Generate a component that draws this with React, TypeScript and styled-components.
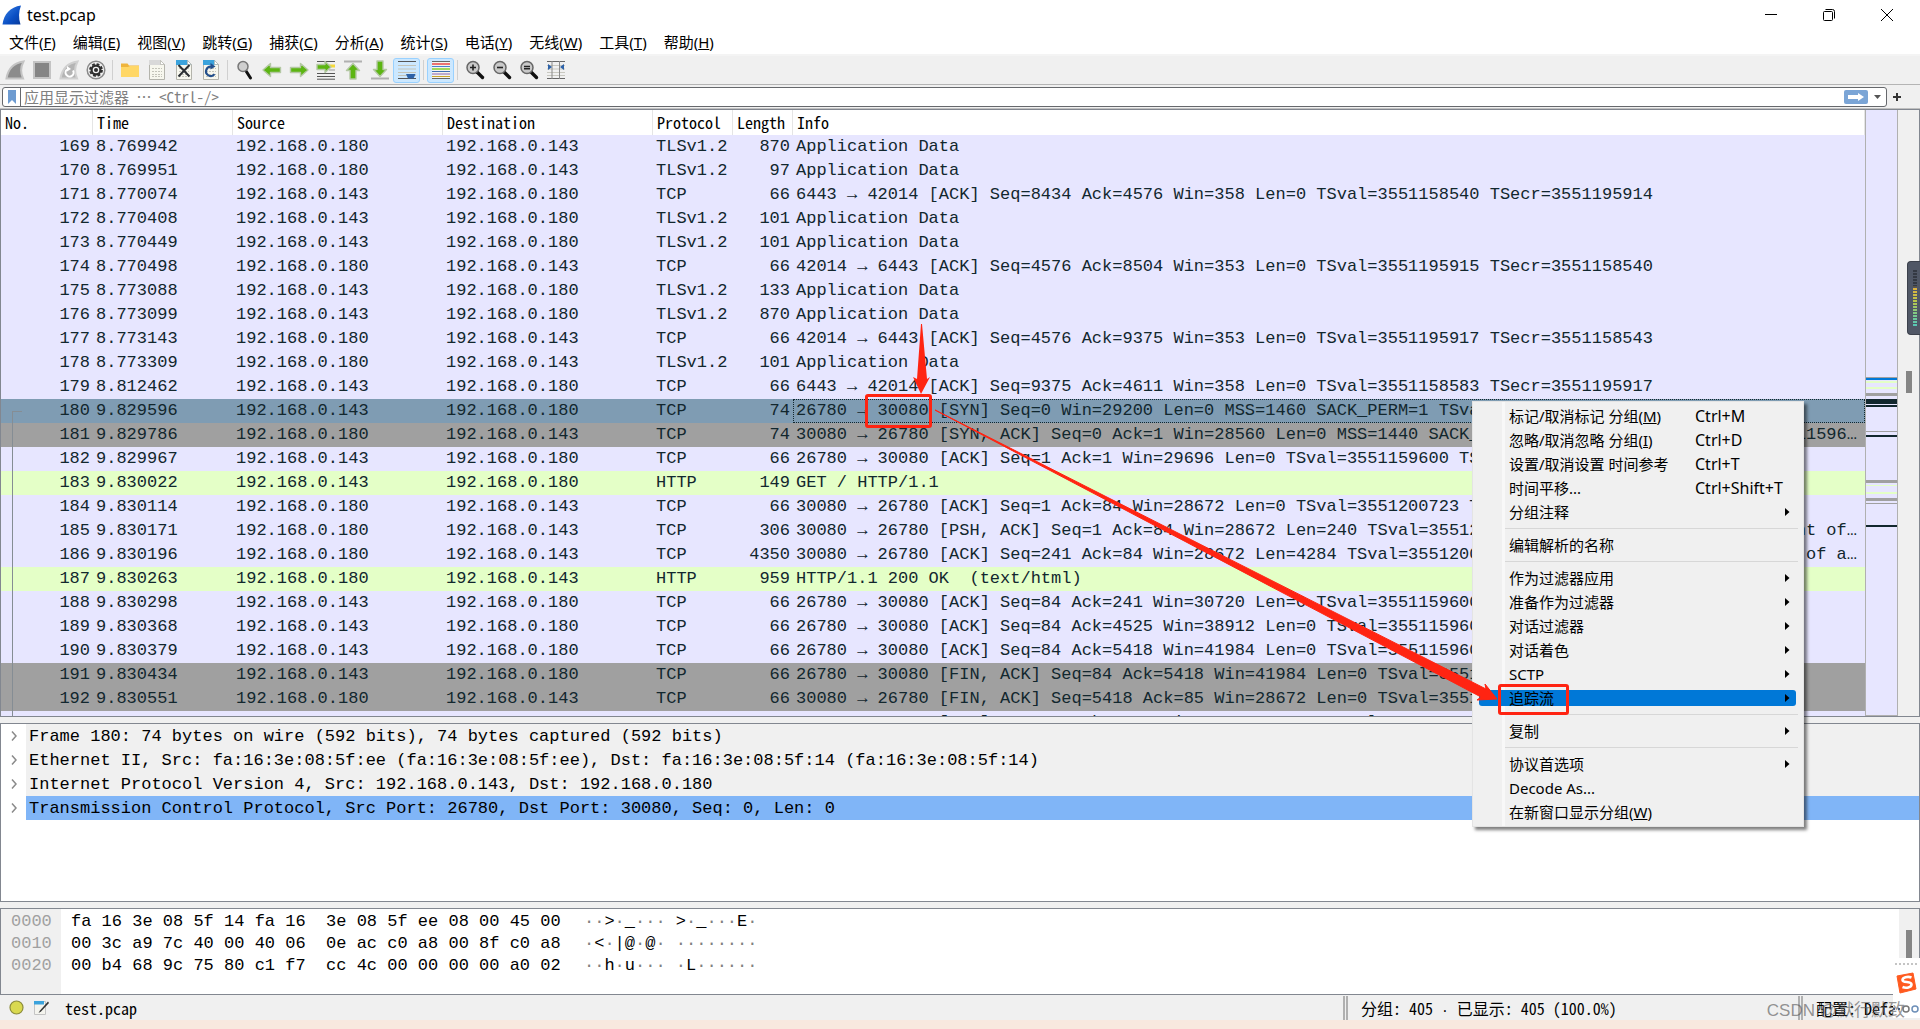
import React from "react";
import styled, { createGlobalStyle, css } from "styled-components";

const MONO = '"Liberation Mono", monospace';
const UI = '"Noto Sans", "Noto Sans CJK SC", sans-serif';
const SONG = '"Noto Sans Mono CJK SC", "Noto Sans CJK SC", monospace';

const Global = createGlobalStyle`
  *, *::before, *::after { box-sizing: border-box; }
  body { margin: 0; background: #f8e8df; color: #000; font-family: ${UI}; }
  button, input { font: inherit; color: inherit; }
`;

const Window = styled.div`
  position: relative;
  display: flex;
  flex-direction: column;
  height: 100vh;
  overflow: hidden;
  padding-bottom: 9px;
`;

/* ---------- title and menu bar ---------- */

const TitleBar = styled.header`
  display: flex;
  align-items: center;
  flex: none;
  height: 29px;
  padding: 0 19px 0 2px;
  gap: 5px;
  background: #fff;
`;

const Title = styled.h1`
  flex: 1;
  margin: 0;
  font-size: 16px;
  line-height: 24px;
  font-weight: 400;
`;

const WindowButtons = styled.div`
  display: flex;
  gap: 30px;
`;

const PlainButton = styled.button`
  display: flex;
  align-items: center;
  justify-content: center;
  padding: 0;
  border: 0;
  background: transparent;
`;

const WindowButton = styled(PlainButton)`
  width: 28px;
  height: 24px;
`;

const MenuBar = styled.nav`
  display: flex;
  flex: none;
  height: 27px;
  padding: 0 9px;
  gap: 17px;
  background: #fff;
  border-bottom: 2px solid #f4f4f4;
`;

const MenuButton = styled(PlainButton)`
  font-size: 15px;
  line-height: 24px;
  white-space: nowrap;
`;

/* ---------- tool bar ---------- */

const ToolBar = styled.div`
  display: flex;
  align-items: center;
  flex: none;
  height: 29px;
  padding-left: 1px;
  background: #f0f0f0;
  border-bottom: 1px solid #b4b4b4;
`;

const ToolButton = styled(PlainButton)<{ $on?: boolean }>`
  width: 27px;
  height: 25px;
  border-radius: 3px;
  ${(p) => p.$on && css`
    background: #cce8ff;
    border: 1px solid #99d1ff;
  `}
`;

const ToolSeparator = styled.span`
  width: 1px;
  height: 20px;
  margin: 0 3px;
  background: #d0d0d0;
`;

/* ---------- display filter ---------- */

const FilterBar = styled.form`
  display: flex;
  align-items: center;
  flex: none;
  height: 24px;
  padding: 1px 16px 0 2px;
  gap: 3px;
  background: #f0f0f0;
  border-bottom: 1px solid #c0c0c0;
`;

const FilterBox = styled.div`
  display: flex;
  align-items: center;
  flex: 1;
  height: 20px;
  border: 1px solid #66686c;
  border-radius: 3px;
  background: #fff;
`;

const BookmarkButton = styled(PlainButton)`
  width: 18px;
  height: 18px;
  border-right: 1px solid #66686c;
`;

const FilterInput = styled.input`
  flex: 1;
  min-width: 0;
  height: 18px;
  padding: 0 0 0 3px;
  border: 0;
  outline: 0;
  background: transparent;
  font-family: ${SONG};
  font-size: 15px;
  line-height: 18px;
  &::placeholder { color: #808080; opacity: 1; }
`;

const ApplyButton = styled(PlainButton)`
  width: 24px;
  height: 14px;
  border-radius: 2px;
  background: #7ba5d6;
`;

const DropButton = styled(PlainButton)`
  width: 18px;
  height: 18px;
`;

const AddButton = styled(PlainButton)`
  width: 14px;
  height: 18px;
`;

/* ---------- panes ---------- */

const Panes = styled.main`
  display: flex;
  flex-direction: column;
  flex: 1;
  min-height: 0;
  gap: 6px;
  background: #f0f0f0;
`;

const Pane = styled.section<{ $share: number }>`
  display: flex;
  flex: ${(p) => p.$share} 1 0;
  min-height: 0;
  overflow: hidden;
  border: 1px solid #828790;
  background: #fff;
`;

const ListBody = styled.div`
  flex: 1;
  min-width: 0;
  overflow: hidden;
`;

const PacketTable = styled.table`
  width: 100%;
  table-layout: fixed;
  border-collapse: separate;
  border-spacing: 0;
  font-family: ${MONO};
  font-size: 17px;
  line-height: 24px;
`;

const HeadCell = styled.th`
  height: 25px;
  padding: 0 0 0 4px;
  border-right: 1px solid #e5e5e5;
  font-family: ${SONG};
  font-size: 16px;
  line-height: 24px;
  font-weight: 400;
  text-align: left;
  vertical-align: top;
`;

type Tone = "tcp" | "http" | "syn" | "sel";
const tones: Record<Tone, string> = {
  tcp: "#e7e6ff",
  http: "#e4ffc7",
  syn: "#a0a0a0",
  sel: "#7f9cb3",
};

const PacketRow = styled.tr<{ $tone: Tone }>`
  height: 24px;
  color: #12272e;
  background: ${(p) => tones[p.$tone]};
`;

const Cell = styled.td<{ $right?: boolean; $focus?: boolean }>`
  height: 24px;
  padding: 0 3px;
  overflow: hidden;
  white-space: pre;
  text-overflow: ellipsis;
  text-align: ${(p) => (p.$right ? "right" : "left")};
  ${(p) => p.$focus && css`
    outline: 1px dotted #12272e;
    outline-offset: -1px;
  `}
`;

const NumberCell = styled(Cell)<{ $link?: "start" | "through" }>`
  position: relative;
  ${(p) => p.$link && css`
    &::before {
      content: "";
      position: absolute;
      left: 11px;
      width: 10px;
      bottom: 0;
      top: ${p.$link === "start" ? "12px" : "0"};
      border-left: 1px solid #858d94;
      border-top: ${p.$link === "start" ? "1px solid #858d94" : "0"};
    }
  `}
`;

const MiniMap = styled.div`
  flex: none;
  width: 33px;
  border: 1px solid #b0b0b0;
  border-top: 0;
  background: #e7e6ff;
`;

const ScrollTrack = styled.div<{ $w: number }>`
  position: relative;
  flex: none;
  width: ${(p) => p.$w}px;
  background: #f0f0f0;
`;

const ScrollThumb = styled.span<{ $top: number; $h: number }>`
  position: absolute;
  right: 7px;
  top: ${(p) => p.$top}px;
  width: 6px;
  height: ${(p) => p.$h}px;
  background: #858585;
`;

const Tree = styled.ul`
  flex: 1;
  min-width: 0;
  margin: 0;
  padding: 0;
  list-style: none;
`;

const TreeItem = styled.li`
  display: flex;
  height: 24px;
`;

const Expander = styled(PlainButton)`
  flex: none;
  width: 25px;
  height: 24px;
`;

const TreeText = styled.span<{ $selected?: boolean }>`
  flex: 1;
  padding-left: 3px;
  white-space: pre;
  font-family: ${MONO};
  font-size: 17px;
  line-height: 26px;
  background: ${(p) => (p.$selected ? "#80b5f7" : "#f0f0f0")};
`;

const HexTable = styled.div`
  display: flex;
  flex: 1;
  min-width: 0;
  font-family: ${MONO};
  font-size: 17px;
  line-height: 22px;
  white-space: pre;
`;

const HexOffsets = styled.div`
  flex: none;
  width: 60px;
  padding: 2px 0 0 10px;
  background: #f0f0f0;
  color: #a0a0a0;
`;

const HexBytes = styled.div`
  flex: none;
  width: 523px;
  padding: 2px 0 0 10px;
`;

const HexAscii = styled.div`
  padding-top: 2px;
`;

const Dim = styled.span`
  color: #808080;
`;

/* ---------- status bar ---------- */

const StatusBar = styled.footer`
  display: flex;
  align-items: center;
  flex: none;
  height: 25px;
  padding-left: 9px;
  background: #f0f0f0;
  font-family: ${SONG};
  font-size: 16px;
  line-height: 24px;
  white-space: pre;
`;

const StatusIcons = styled.div`
  display: flex;
  align-items: center;
  gap: 8px;
  width: 56px;
`;

const StatusFile = styled.span`
  flex: 1;
`;

const StatusPart = styled.span<{ $w: number }>`
  width: ${(p) => p.$w}px;
  height: 24px;
  padding-left: 13px;
  border-left: 5px double #b0b0b0;
`;

/* The CJK face would draw the middle dot two columns wide. */
const NarrowDot = styled.span`
  font-family: ${MONO};
  font-size: 13px;
`;

/* ---------- context menu ---------- */

const Popup = styled.div`
  position: absolute;
  left: 1472px;
  top: 401px;
  width: 332px;
  padding: 2px;
  border: 1px solid #e4e4e4;
  background: linear-gradient(90deg, #f0f0f0 29px, #f8f8f8 29px, #f8f8f8 32px, #f0f0f0 32px);
  box-shadow: 3px 3px 3px rgba(0, 0, 0, 0.5);
`;

const PopupItem = styled.button<{ $active?: boolean }>`
  position: relative;
  isolation: isolate;
  display: grid;
  grid-template-columns: 186px 1fr 12px;
  align-items: center;
  width: 100%;
  height: 24px;
  padding: 0 4px 0 34px;
  border: 0;
  text-align: left;
  white-space: nowrap;
  font-size: 15px;
  line-height: 24px;
  background: transparent;
  ${(p) => p.$active && css`
    &::before {
      content: "";
      position: absolute;
      z-index: -1;
      inset: 4px 5px 4px 4px;
      border-radius: 3px;
      background: #0078d7;
    }
  `}
`;

const Shortcut = styled.span`
  font-size: 16px;
`;

const PopupRule = styled.hr`
  height: 1px;
  margin: 4px 3px 4px 30px;
  border: 0;
  background: #d7d7d7;
`;

/* ---------- overlays ---------- */

const Marks = styled.svg`
  position: absolute;
  left: 0;
  top: 0;
  pointer-events: none;
`;

const MarkBox = styled.span<{ $x: number; $y: number; $w: number; $h: number }>`
  position: absolute;
  left: ${(p) => p.$x}px;
  top: ${(p) => p.$y}px;
  width: ${(p) => p.$w}px;
  height: ${(p) => p.$h}px;
  border: 3px solid #ff2412;
  border-radius: 3px;
  pointer-events: none;
`;

const Meter = styled.div`
  position: absolute;
  right: 0;
  top: 261px;
  width: 13px;
  height: 74px;
  padding: 8px 3px 7px 5px;
  border: 1px solid #3c414c;
  border-right: 0;
  border-radius: 4px 0 0 4px;
  background: #505766;
`;

const MeterBars = styled.div`
  height: 100%;
  background:
    repeating-linear-gradient(transparent 0 2px, #505766 2px 3px),
    linear-gradient(#343943 0 28%, #e0b13c 32%, #b9c84b 55%, #7cc98a 78%, #52c8bb);
`;

const ImeBar = styled.div`
  position: absolute;
  right: 0;
  bottom: 11px;
  display: flex;
  flex-direction: column;
  align-items: center;
  width: 27px;
  height: 60px;
  background: #fff;
`;

const Watermark = styled.span`
  position: absolute;
  right: 15px;
  bottom: 6px;
  color: rgba(90, 90, 90, 0.65);
  font-family: "Liberation Sans", "Noto Sans CJK SC", sans-serif;
  font-size: 17px;
  line-height: 24px;
`;

/* ---------- icons ---------- */

const Svg = ({ children, w = 20, h = 20 }: { children: React.ReactNode; w?: number; h?: number }) => (
  <svg width={w} height={h} viewBox={`0 0 ${w} ${h}`} fill="none" aria-hidden="true">
    {children}
  </svg>
);

const FIN = "M1.5 18.500C3 9 8 3 18.500 1.500C15.500 7 15.500 13 18 18.500Z";

const Sheet = ({ tint, mark }: { tint: string; mark?: React.ReactNode }) => (
  <Svg>
    <path d="M2.500 .5h11l4 4v15h-15z" fill="#f7f7ee" stroke="#b4b4ac" />
    <path d="M2 0h11.500l4 5H2z" fill={tint} />
    <path d="M13.500 .5v4h4z" fill="#fff" stroke="#b4b4ac" strokeWidth=".7" />
    <path d="M5 8.500h10M5 11.500h10M5 14.500h10M5 16.500h10" stroke="#c4c4ba" strokeDasharray="2 1" />
    {mark}
  </Svg>
);

const Magnifier = ({ mark }: { mark?: string }) => (
  <Svg>
    <path d="M12 12l5.500 5.500" stroke="#111" strokeWidth="3.400" strokeLinecap="round" />
    <circle cx="8" cy="7.500" r="6" fill="#c9c9c9" stroke="#666" strokeWidth="1.500" />
    {mark && <path d={mark} stroke="#222" strokeWidth="1.600" />}
  </Svg>
);

const ARROW_STYLE = { fill: "#5cb512", stroke: "#b4c8a4", strokeWidth: 1.4, strokeLinejoin: "round" as const };

const icons: Record<string, React.ReactNode> = {
  start: <Svg><path d={FIN} fill="#8c8c8c" stroke="#c4c4c4" strokeWidth="2" /></Svg>,
  stop: <Svg><path d="M2 2h16v16H2z" fill="#858585" stroke="#c4c4c4" strokeWidth="2" /></Svg>,
  restart: (
    <Svg>
      <path d={FIN} fill="#b4b4b4" stroke="#d0d0d0" strokeWidth="2" />
      <path d="M8 9.500a4 4 0 1 0 6 1" stroke="#fff" strokeWidth="2" />
      <path d="M8 6v5.500l4-2.500z" fill="#fff" />
    </Svg>
  ),
  options: (
    <Svg>
      <circle cx="10" cy="10" r="8.800" fill="#f2f2f2" stroke="#8a8a8a" strokeWidth="1.500" />
      <circle cx="10" cy="10" r="6" stroke="#2e2e2e" strokeWidth="1.800" strokeDasharray="2.800 1.900" />
      <circle cx="10" cy="10" r="4.400" fill="#f2f2f2" stroke="#2e2e2e" strokeWidth="2.200" />
      <circle cx="10" cy="10" r="2" fill="#2e2e2e" />
    </Svg>
  ),
  open: (
    <Svg>
      <path d="M1 3.500h6.500l1.500 2h10V17H1z" fill="#efb43c" />
      <path d="M1 7h7l2-1h9v11H1z" fill="#ffd766" />
    </Svg>
  ),
  save: <Sheet tint="#d9d9d9" />,
  close: <Sheet tint="#3ba3dc" mark={<path d="M4.500 5l11 11.500M15.500 5l-11 11.500" stroke="#2b2f33" strokeWidth="2" />} />,
  reload: (
    <Sheet
      tint="#3ba3dc"
      mark={<><path d="M13.500 14.200a4.700 4.700 0 1 1-2.500-7.400" stroke="#24508c" strokeWidth="2.200" /><path d="M9.500 3l5 3.500-5 3z" fill="#24508c" /></>}
    />
  ),
  find: (
    <Svg>
      <path d="M11 11l4.500 7" stroke="#111" strokeWidth="3" strokeLinecap="round" />
      <circle cx="8" cy="6.500" r="5" fill="#cfcfcf" stroke="#777" strokeWidth="1.500" />
    </Svg>
  ),
  back: <Svg><path d="M1 10l7.500-6.500v4h10v5h-10v4z" {...ARROW_STYLE} /></Svg>,
  forward: <Svg><path d="M19 10l-7.500-6.500v4h-10v5h10v4z" {...ARROW_STYLE} /></Svg>,
  goto: (
    <Svg>
      <path d="M1 1.500h18M1 13.500h18M1 16.500h18M1 19.200h18" stroke="#555" />
      <path d="M13 6h6" stroke="#f5d93a" strokeWidth="3" />
      <path d="M13 10h6" stroke="#999" />
      <path d="M15 7L9 1.500v3H1v5h8v3z" {...ARROW_STYLE} />
    </Svg>
  ),
  first: (
    <Svg>
      <path d="M1 1.500h18" stroke="#b0b0b0" strokeWidth="2" />
      <path d="M10 3.500l6.500 7h-3.500v8.500h-6v-8.500h-3.500z" {...ARROW_STYLE} />
    </Svg>
  ),
  last: (
    <Svg>
      <path d="M1 18.500h18" stroke="#b0b0b0" strokeWidth="2" />
      <path d="M10 16.500l6.500-7h-3.500v-8.500h-6v8.500h-3.500z" {...ARROW_STYLE} />
    </Svg>
  ),
  autoscroll: (
    <Svg>
      <path d="M1 1.500h18M1 18.500h18" stroke="#555" />
      <path d="M1 5.500h18M1 9h18M1 12.500h18M1 15.500h18" stroke="#c4c4b8" />
      <path d="M9 14h9.500l-2 4.500h-5.500z" fill="#2d62a8" />
    </Svg>
  ),
  colorize: (
    <Svg>
      <path d="M1 1h18v18H1z" fill="#f4f4ee" />
      <path d="M1 1.500h18M1 18.500h18" stroke="#666" />
      <path d="M1 4h18" stroke="#ea4848" strokeWidth="1.500" />
      <path d="M1 6.500h18" stroke="#4a7fd0" />
      <path d="M1 9h18" stroke="#84cf2c" strokeWidth="1.500" />
      <path d="M1 11.500h18" stroke="#3f6eb4" />
      <path d="M1 14h18" stroke="#8a63b0" />
      <path d="M1 16.500h18" stroke="#c9a227" />
    </Svg>
  ),
  zoomin: <Magnifier mark="M5 7.500h6M8 4.500v6" />,
  zoomout: <Magnifier mark="M5 7.500h6" />,
  zoomreset: <Magnifier mark="M5 6.500h6M5 8.800h6" />,
  columns: (
    <Svg>
      <path d="M1 1.500h18M1 18.500h18" stroke="#666" />
      <path d="M1 5.500h18M1 9h18M1 12.500h18M1 15.500h18" stroke="#c8c8c0" />
      <path d="M6 1v18M13.500 1v18" stroke="#8a8a8a" />
      <path d="M2 4l4 3-4 3zM18 4l-4 3 4 3z" fill="#2d62a8" />
    </Svg>
  ),
};

const tools: Array<[string, string] | null> = [
  ["start", "开始捕获"], ["stop", "停止捕获"], ["restart", "重新捕获"], ["options", "捕获选项"], null,
  ["open", "打开"], ["save", "保存"], ["close", "关闭"], ["reload", "重新加载"], null,
  ["find", "查找"], ["back", "后退"], ["forward", "前进"], ["goto", "转到分组"], ["first", "首个分组"],
  ["last", "末个分组"], ["autoscroll", "自动滚动"], null, ["colorize", "着色"], null,
  ["zoomin", "放大"], ["zoomout", "缩小"], ["zoomreset", "原始大小"], ["columns", "调整列宽"],
];
const pressed = ["autoscroll", "colorize"];

/* ---------- data ---------- */

const menus = [
  ["文件", "F"], ["编辑", "E"], ["视图", "V"], ["跳转", "G"], ["捕获", "C"], ["分析", "A"],
  ["统计", "S"], ["电话", "Y"], ["无线", "W"], ["工具", "T"], ["帮助", "H"],
];

const A = "192.168.0.180";
const B = "192.168.0.143";
type Packet = [number, string, "A" | "B", string, number, string, Tone];
const packets: Packet[] = [
  [169, "8.769942", "A", "TLSv1.2", 870, "Application Data", "tcp"],
  [170, "8.769951", "A", "TLSv1.2", 97, "Application Data", "tcp"],
  [171, "8.770074", "B", "TCP", 66, "6443 → 42014 [ACK] Seq=8434 Ack=4576 Win=358 Len=0 TSval=3551158540 TSecr=3551195914", "tcp"],
  [172, "8.770408", "B", "TLSv1.2", 101, "Application Data", "tcp"],
  [173, "8.770449", "B", "TLSv1.2", 101, "Application Data", "tcp"],
  [174, "8.770498", "A", "TCP", 66, "42014 → 6443 [ACK] Seq=4576 Ack=8504 Win=353 Len=0 TSval=3551195915 TSecr=3551158540", "tcp"],
  [175, "8.773088", "B", "TLSv1.2", 133, "Application Data", "tcp"],
  [176, "8.773099", "B", "TLSv1.2", 870, "Application Data", "tcp"],
  [177, "8.773143", "A", "TCP", 66, "42014 → 6443 [ACK] Seq=4576 Ack=9375 Win=353 Len=0 TSval=3551195917 TSecr=3551158543", "tcp"],
  [178, "8.773309", "A", "TLSv1.2", 101, "Application Data", "tcp"],
  [179, "8.812462", "B", "TCP", 66, "6443 → 42014 [ACK] Seq=9375 Ack=4611 Win=358 Len=0 TSval=3551158583 TSecr=3551195917", "tcp"],
  [180, "9.829596", "B", "TCP", 74, "26780 → 30080 [SYN] Seq=0 Win=29200 Len=0 MSS=1460 SACK_PERM=1 TSval=3551159600 TSecr=0 WS=512", "sel"],
  [181, "9.829786", "A", "TCP", 74, "30080 → 26780 [SYN, ACK] Seq=0 Ack=1 Win=28560 Len=0 MSS=1440 SACK_PERM=1 TSval=51200723 TSecr=3551159600 WS=512", "syn"],
  [182, "9.829967", "B", "TCP", 66, "26780 → 30080 [ACK] Seq=1 Ack=1 Win=29696 Len=0 TSval=3551159600 TSecr=3551200723", "tcp"],
  [183, "9.830022", "B", "HTTP", 149, "GET / HTTP/1.1 ", "http"],
  [184, "9.830114", "A", "TCP", 66, "30080 → 26780 [ACK] Seq=1 Ack=84 Win=28672 Len=0 TSval=3551200723 TSecr=3551159600", "tcp"],
  [185, "9.830171", "A", "TCP", 306, "30080 → 26780 [PSH, ACK] Seq=1 Ack=84 Win=28672 Len=240 TSval=3551200723 TSecr=51159600 [TCP segment of a reassembled PDU]", "tcp"],
  [186, "9.830196", "A", "TCP", 4350, "30080 → 26780 [ACK] Seq=241 Ack=84 Win=28672 Len=4284 TSval=3551200723 TSecr=51159600 [TCP segment of a reassembled PDU]", "tcp"],
  [187, "9.830263", "A", "HTTP", 959, "HTTP/1.1 200 OK  (text/html)", "http"],
  [188, "9.830298", "B", "TCP", 66, "26780 → 30080 [ACK] Seq=84 Ack=241 Win=30720 Len=0 TSval=3551159600 TSecr=3551200723", "tcp"],
  [189, "9.830368", "B", "TCP", 66, "26780 → 30080 [ACK] Seq=84 Ack=4525 Win=38912 Len=0 TSval=3551159600 TSecr=3551200723", "tcp"],
  [190, "9.830379", "B", "TCP", 66, "26780 → 30080 [ACK] Seq=84 Ack=5418 Win=41984 Len=0 TSval=3551159600 TSecr=3551200723", "tcp"],
  [191, "9.830434", "B", "TCP", 66, "26780 → 30080 [FIN, ACK] Seq=84 Ack=5418 Win=41984 Len=0 TSval=3551159600 TSecr=3551200723", "syn"],
  [192, "9.830551", "A", "TCP", 66, "30080 → 26780 [FIN, ACK] Seq=5418 Ack=85 Win=28672 Len=0 TSval=3551200723 TSecr=3551159600", "syn"],
  [193, "9.830699", "B", "TCP", 66, "26780 → 30080 [ACK] Seq=85 Ack=5419 Win=41984 Len=0 TSval=3551159601 TSecr=3551200723", "tcp"],
];

/* [top, height, colour] of each band in the overview strip */
const bands: Array<[number, number, string]> = [
  [267, 1, "#a0a0a0"], [268, 2, "#0078d7"], [271, 2, "#e4ffc7"], [277, 2, "#e4ffc7"],
  [283, 3, "#a0a0a0"], [289, 5, "#12272e"], [295, 2, "#12272e"], [321, 1, "#a0a0a0"],
  [325, 2, "#12272e"], [370, 3, "#a0a0a0"], [375, 1, "#e4ffc7"], [382, 2, "#e4ffc7"],
  [388, 3, "#a0a0a0"], [393, 1, "#a0a0a0"], [415, 2, "#12272e"],
];

const tree = [
  "Frame 180: 74 bytes on wire (592 bits), 74 bytes captured (592 bits)",
  "Ethernet II, Src: fa:16:3e:08:5f:ee (fa:16:3e:08:5f:ee), Dst: fa:16:3e:08:5f:14 (fa:16:3e:08:5f:14)",
  "Internet Protocol Version 4, Src: 192.168.0.143, Dst: 192.168.0.180",
  "Transmission Control Protocol, Src Port: 26780, Dst Port: 30080, Seq: 0, Len: 0",
];

const hex = [
  ["0000", "fa 16 3e 08 5f 14 fa 16  3e 08 5f ee 08 00 45 00", "··>·_··· >·_···E·"],
  ["0010", "00 3c a9 7c 40 00 40 06  0e ac c0 a8 00 8f c0 a8", "·<·|@·@· ········"],
  ["0020", "00 b4 68 9c 75 80 c1 f7  cc 4c 00 00 00 00 a0 02", "··h·u··· ·L······"],
];

type Entry = { t: string; k?: string; s?: string; sub?: boolean; on?: boolean } | null;
const popup: Entry[] = [
  { t: "标记/取消标记 分组", k: "M", s: "Ctrl+M" },
  { t: "忽略/取消忽略 分组", k: "I", s: "Ctrl+D" },
  { t: "设置/取消设置 时间参考", s: "Ctrl+T" },
  { t: "时间平移...", s: "Ctrl+Shift+T" },
  { t: "分组注释", sub: true },
  null,
  { t: "编辑解析的名称" },
  null,
  { t: "作为过滤器应用", sub: true },
  { t: "准备作为过滤器", sub: true },
  { t: "对话过滤器", sub: true },
  { t: "对话着色", sub: true },
  { t: "SCTP", sub: true },
  { t: "追踪流", sub: true, on: true },
  null,
  { t: "复制", sub: true },
  null,
  { t: "协议首选项", sub: true },
  { t: "Decode As..." },
  { t: "在新窗口显示分组", k: "W" },
];

const linkOf = (no: number) => (no === 180 ? "start" : no > 180 ? "through" : undefined);

/* ---------- parts ---------- */

const PacketList = () => (
  <Pane $share={609}>
    <ListBody>
      <PacketTable>
        <colgroup>
          <col style={{ width: 92 }} />
          <col style={{ width: 140 }} />
          <col style={{ width: 210 }} />
          <col style={{ width: 210 }} />
          <col style={{ width: 80 }} />
          <col style={{ width: 60 }} />
          <col />
        </colgroup>
        <thead>
          <tr>
            {["No.", "Time", "Source", "Destination", "Protocol", "Length", "Info"].map((h) => (
              <HeadCell key={h}>{h}</HeadCell>
            ))}
          </tr>
        </thead>
        <tbody>
          {packets.map(([no, time, from, proto, len, info, tone]) => (
            <PacketRow key={no} $tone={tone}>
              <NumberCell $right $link={linkOf(no)}>{no}</NumberCell>
              <Cell>{time}</Cell>
              <Cell>{from === "A" ? A : B}</Cell>
              <Cell>{from === "A" ? B : A}</Cell>
              <Cell>{proto}</Cell>
              <Cell $right>{len}</Cell>
              <Cell $focus={tone === "sel"}>{info}</Cell>
            </PacketRow>
          ))}
        </tbody>
      </PacketTable>
    </ListBody>
    <MiniMap>
      <svg width="31" height="600" aria-hidden="true">
        {bands.map(([y, h, c]) => (
          <rect key={y} x="0" y={y} width="31" height={h} fill={c} />
        ))}
      </svg>
    </MiniMap>
    <ScrollTrack $w={21}>
      <ScrollThumb $top={261} $h={22} />
    </ScrollTrack>
  </Pane>
);

const Details = () => (
  <Pane $share={178}>
    <Tree>
      {tree.map((line, i) => (
        <TreeItem key={line}>
          <Expander type="button" aria-label="展开">
            <Svg w={8} h={12}><path d="M2 1.500l4 4.500-4 4.500" stroke="#8a8a8a" strokeWidth="1.500" /></Svg>
          </Expander>
          <TreeText $selected={i === 3}>{line}</TreeText>
        </TreeItem>
      ))}
    </Tree>
  </Pane>
);

const Bytes = () => (
  <Pane $share={86}>
    <HexTable>
      <HexOffsets>{hex.map(([o]) => <div key={o}>{o}</div>)}</HexOffsets>
      <HexBytes>{hex.map(([o, b]) => <div key={o}>{b}</div>)}</HexBytes>
      <HexAscii>
        {hex.map(([o, , text]) => (
          <div key={o}>
            {text.split(/(·+)/).map((part, i) => (part[0] === "·" ? <Dim key={i}>{part}</Dim> : part))}
          </div>
        ))}
      </HexAscii>
    </HexTable>
    <ScrollTrack $w={20}>
      <ScrollThumb $top={21} $h={40} />
    </ScrollTrack>
  </Pane>
);

const ContextMenu = () => (
  <Popup role="menu">
    {popup.map((e, i) =>
      e === null ? (
        <PopupRule key={i} />
      ) : (
        <PopupItem key={i} type="button" role="menuitem" $active={e.on}>
          <span>{e.t}{e.k && <>(<u>{e.k}</u>)</>}</span>
          <Shortcut>{e.s}</Shortcut>
          {e.sub && <Svg w={5} h={8}><path d="M0 0l4.500 4-4.500 4z" fill="#000" /></Svg>}
        </PopupItem>
      )
    )}
  </Popup>
);

export default function App() {
  return (
    <>
      <Global />
      <Window>
        <TitleBar>
          <Svg w={20} h={20}>
            <defs>
              <linearGradient id="fin" x1="0" y1="0" x2="1" y2="1">
                <stop offset="0" stopColor="#3d84e6" />
                <stop offset=".6" stopColor="#0a4fc4" />
                <stop offset="1" stopColor="#083a9a" />
              </linearGradient>
            </defs>
            <path d="M.5 19.500C2 9 8 2 19 .5C16.500 7 16.500 13 18.500 19.500Z" fill="url(#fin)" />
          </Svg>
          <Title>test.pcap</Title>
          <WindowButtons>
            <WindowButton type="button" aria-label="最小化"><Svg w={12} h={12}><path d="M0 5.500h12" stroke="#000" /></Svg></WindowButton>
            <WindowButton type="button" aria-label="还原">
              <Svg w={12} h={12}>
                <rect x=".5" y="2.500" width="9" height="9" rx="1" stroke="#000" />
                <path d="M2.500 .5h7a2 2 0 0 1 2 2v7" stroke="#000" />
              </Svg>
            </WindowButton>
            <WindowButton type="button" aria-label="关闭"><Svg w={12} h={12}><path d="M0 0l12 12M12 0L0 12" stroke="#000" /></Svg></WindowButton>
          </WindowButtons>
        </TitleBar>
        <MenuBar>
          {menus.map(([name, key]) => (
            <MenuButton key={key} type="button">{name}(<u>{key}</u>)</MenuButton>
          ))}
        </MenuBar>
        <ToolBar>
          {tools.map((tool, i) =>
            tool ? (
              <ToolButton key={tool[0]} type="button" aria-label={tool[1]} $on={pressed.includes(tool[0])}>
                {icons[tool[0]]}
              </ToolButton>
            ) : (
              <ToolSeparator key={i} />
            )
          )}
        </ToolBar>
        <FilterBar onSubmit={(e) => e.preventDefault()}>
          <FilterBox>
            <BookmarkButton type="button" aria-label="书签">
              <Svg w={8} h={14}><path d="M0 0h8v14l-4-4-4 4z" fill="#6d9bd1" /></Svg>
            </BookmarkButton>
            <FilterInput aria-label="显示过滤器" placeholder="应用显示过滤器 … <Ctrl-/>" />
            <ApplyButton type="submit" aria-label="应用">
              <Svg w={16} h={8}><path d="M0 2h10V0l6 4-6 4V6H0z" fill="#fff" /></Svg>
            </ApplyButton>
            <DropButton type="button" aria-label="最近的过滤器">
              <Svg w={7} h={4}><path d="M0 0h7L3.500 4z" fill="#555" /></Svg>
            </DropButton>
          </FilterBox>
          <AddButton type="button" aria-label="添加">
            <Svg w={8} h={8}><path d="M4 0v8M0 4h8" stroke="#333" strokeWidth="2" /></Svg>
          </AddButton>
        </FilterBar>
        <Panes>
          <PacketList />
          <Details />
          <Bytes />
        </Panes>
        <StatusBar>
          <StatusIcons>
            <Svg w={16} h={16}><circle cx="7.500" cy="7.500" r="6.500" fill="#d9d94f" stroke="#8c8c3a" strokeWidth="1.200" /></Svg>
            <Svg w={16} h={16}>
              <path d="M1.500 1.500h11v13h-11z" fill="#f4f4ee" stroke="#c4c4c4" />
              <path d="M1 1h10v3.500H1z" fill="#3ba3dc" />
              <path d="M15 1.500l-8 9-1.500 2.500L8 11.500 16 3z" fill="#333" />
            </Svg>
          </StatusIcons>
          <StatusFile>test.pcap</StatusFile>
          <StatusPart $w={455}>分组: 405 <NarrowDot>·</NarrowDot> 已显示: 405 (100.0%)</StatusPart>
          <StatusPart $w={122}>配置: Default</StatusPart>
        </StatusBar>

        <ContextMenu />
        <Marks width="1920" height="1029" aria-hidden="true">
          <path d="M921 324h1l5 55 3-2-9 17-8-17 4 2z" fill="#ff2412" />
          <path d="M935 410L1486 689l-1-5 12 15-20 1 4-3z" fill="#ff2412" stroke="#ff2412" />
        </Marks>
        <MarkBox $x={865} $y={394} $w={67} $h={34} />
        <MarkBox $x={1498} $y={684} $w={71} $h={31} />
        <Meter><MeterBars /></Meter>
        <ImeBar>
          <Svg w={27} h={60}>
            <path d="M2 6h24" stroke="#c4c4c4" strokeWidth="2" strokeDasharray="2 2" />
            <path d="M4 18l16-3 3 16-16 4z" fill="#ff5a1f" stroke="#ff5a1f" strokeLinejoin="round" />
            <path d="M18.500 19.500c-4-1.500-9 0-9 2.500 0 3.500 9 .5 9 4.500 0 3-5.500 4-9 2.500" stroke="#fff" strokeWidth="2.600" />
            <path d="M0 51h2M5 51h2" stroke="#3c5a8c" strokeWidth="2" />
            <circle cx="13" cy="51" r="3" stroke="#777" strokeWidth="1.500" />
            <circle cx="22" cy="51" r="3" stroke="#6d8fb8" strokeWidth="1.500" />
          </Svg>
        </ImeBar>
        <Watermark>CSDN @默行默致</Watermark>
      </Window>
    </>
  );
}
